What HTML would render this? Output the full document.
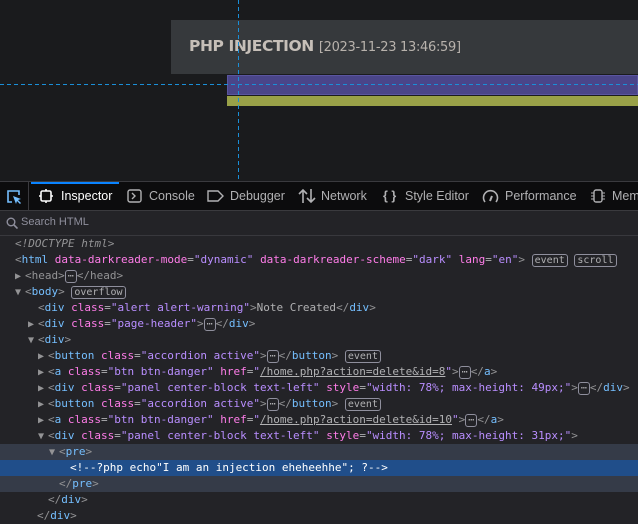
<!DOCTYPE html>
<html><head><style>
*{margin:0;padding:0;box-sizing:border-box}
body{width:638px;height:522px;overflow:hidden;background:#232327;font-family:"Liberation Sans",sans-serif;position:relative}
.page{position:absolute;left:0;top:0;width:638px;height:181px;background:#1a1b1d}
.hdr{position:absolute;left:171px;top:20px;width:467px;height:54px;background:#36393c}
.hdr b{position:absolute;left:18px;top:17px;font-family:"DejaVu Sans",sans-serif;font-size:15.5px;color:#c6bfb8;letter-spacing:-0.4px}
.hdr span{font-family:"DejaVu Sans",sans-serif;font-size:13px;color:#b8b2ac;font-weight:normal;letter-spacing:-0.3px}
.pur{position:absolute;left:227px;top:75px;width:411px;height:20px;background:#4a4589;border:1px solid #5a55a0}
.oli{position:absolute;left:227px;top:96px;width:411px;height:10px;background:#99a148}
.vl{position:absolute;left:238px;top:0;width:1px;height:181px;background:repeating-linear-gradient(180deg,#1a8fd8 0 4px,transparent 4px 7px)}
.hl{position:absolute;left:0;top:84px;width:638px;height:1px;background:repeating-linear-gradient(90deg,#1a8fd8 0 4px,transparent 4px 7px)}
.tb{position:absolute;left:0;top:181px;width:638px;height:30px;background:#0c0c0d;border-top:1px solid #3a3a3e;border-bottom:1px solid #3a3a3e;font-size:12.5px;color:#b1b1b3}
.tb .t{position:absolute;top:7px;white-space:nowrap}
.act{position:absolute;left:31px;top:0;width:88px;height:2px;background:#0a84ff}
.sr{position:absolute;left:0;top:211px;width:638px;height:25px;border-bottom:1px solid #38383d;color:#8f8f9d;font-size:11px}
.code{position:absolute;left:0;top:236px;width:638px;font-family:"DejaVu Sans Mono","Liberation Mono",monospace;font-size:11px;color:#b1b1b3}
.r{height:16px;line-height:16px;white-space:nowrap;position:relative}
.tg{color:#75bfff}.at{color:#ff7de9}.v{color:#b98eff}.g{color:#939395}
.bd{display:inline-block;border:1px solid #8f8f9d;border-radius:3px;font-size:10px;line-height:11px;padding:0 2px;color:#b1b1b3}
.tri{color:#939395;font-size:10px;display:inline-block;width:10px}
u{color:#b1b1b3}
</style></head><body>
<div class="page">
<div class="hdr"><b>PHP INJECTION <span>[2023-11-23 13:46:59]</span></b></div>
<div class="pur"></div><div class="oli"></div>
<div class="hl"></div><div class="vl"></div>
</div>
<div class="tb">
<div class="act"></div>
<svg style="position:absolute;left:6px;top:7px" width="16" height="16" viewBox="0 0 16 16"><path d="M6 13H2V2h11v4" fill="none" stroke="#75bfff" stroke-width="1.6"/><path d="M7 7l8 3-3 1 3 3-1 1-3-3-1 3z" fill="#75bfff"/></svg>
<div style="position:absolute;left:28px;top:0;width:1px;height:28px;background:#3a3a3e"></div>
<svg style="position:absolute;left:39px;top:7px" width="14" height="14" viewBox="0 0 14 14"><rect x="2" y="2" width="10" height="10" rx="1.5" fill="none" stroke="#fff" stroke-width="1.6"/><path d="M7 0v2M7 12v2M0 7h2M12 7h2" stroke="#fff" stroke-width="1.6"/></svg>
<span class="t" style="left:61px;color:#fff">Inspector</span>
<svg style="position:absolute;left:127px;top:7px" width="15" height="14"><rect x="1" y="1" width="13" height="12" rx="2" fill="none" stroke="#b1b1b3" stroke-width="1.4"/><path d="M5 4l3 3-3 3" fill="none" stroke="#b1b1b3" stroke-width="1.4"/></svg>
<span class="t" style="left:149px">Console</span>
<svg style="position:absolute;left:207px;top:8px" width="17" height="12"><path d="M1 1h10l5 5-5 5H1z" fill="none" stroke="#b1b1b3" stroke-width="1.4"/></svg>
<span class="t" style="left:230px">Debugger</span>
<svg style="position:absolute;left:298px;top:6px" width="18" height="16"><path d="M5 15V2M1 6l4-4 4 4M13 1v13M9 10l4 4 4-4" fill="none" stroke="#b1b1b3" stroke-width="1.6"/></svg>
<span class="t" style="left:321px">Network</span>
<span class="t" style="left:383px;font-weight:bold;color:#b1b1b3">{ }</span>
<span class="t" style="left:405px">Style Editor</span>
<svg style="position:absolute;left:482px;top:6px" width="17" height="16"><path d="M3 14A7 7 0 1 1 14 14" fill="none" stroke="#b1b1b3" stroke-width="1.6"/><path d="M8 13l2-5" stroke="#b1b1b3" stroke-width="2"/></svg>
<span class="t" style="left:505px">Performance</span>
<svg style="position:absolute;left:590px;top:6px" width="16" height="16"><rect x="4" y="2" width="8" height="12" rx="2" fill="none" stroke="#b1b1b3" stroke-width="1.4"/><path d="M1 5h3M1 8h3M1 11h3M12 5h3M12 8h3M12 11h3" stroke="#b1b1b3"/></svg>
<span class="t" style="left:612px">Mem</span>
</div>
<div class="sr">
<svg style="position:absolute;left:6px;top:6px" width="12" height="12"><circle cx="5" cy="5" r="3.8" fill="none" stroke="#8f8f9d" stroke-width="1.4"/><path d="M8 8l3.5 3.5" stroke="#8f8f9d" stroke-width="1.6"/></svg>
<span style="position:absolute;left:21px;top:5px">Search HTML</span>
</div>
<div class="code">
<div class="r" style="padding-left:15px"><span class="g"><i>&lt;!DOCTYPE html&gt;</i></span></div>
<div class="r" style="padding-left:15px"><span class="g">&lt;</span><span class="tg">html</span> <span class="at">data-darkreader-mode</span>=<span class="v">"dynamic"</span> <span class="at">data-darkreader-scheme</span>=<span class="v">"dark"</span> <span class="at">lang</span>=<span class="v">"en"</span><span class="g">&gt;</span> <span class="bd">event</span> <span class="bd">scroll</span></div>
<div class="r" style="padding-left:15px"><span class="tri">▶</span><span class="g">&lt;head&gt;<span class="bd">⋯</span>&lt;/head&gt;</span></div>
<div class="r" style="padding-left:15px"><span class="tri">▼</span><span class="g">&lt;</span><span class="tg">body</span><span class="g">&gt;</span> <span class="bd">overflow</span></div>
<div class="r" style="padding-left:38px"><span class="g">&lt;</span><span class="tg">div</span> <span class="at">class</span>=<span class="v">"alert alert-warning"</span><span class="g">&gt;</span>Note Created<span class="g">&lt;/</span><span class="tg">div</span><span class="g">&gt;</span></div>
<div class="r" style="padding-left:28px"><span class="tri">▶</span><span class="g">&lt;</span><span class="tg">div</span> <span class="at">class</span>=<span class="v">"page-header"</span><span class="g">&gt;</span><span class="bd">⋯</span><span class="g">&lt;/</span><span class="tg">div</span><span class="g">&gt;</span></div>
<div class="r" style="padding-left:28px"><span class="tri">▼</span><span class="g">&lt;</span><span class="tg">div</span><span class="g">&gt;</span></div>
<div class="r" style="padding-left:38px"><span class="tri">▶</span><span class="g">&lt;</span><span class="tg">button</span> <span class="at">class</span>=<span class="v">"accordion active"</span><span class="g">&gt;</span><span class="bd">⋯</span><span class="g">&lt;/</span><span class="tg">button</span><span class="g">&gt;</span> <span class="bd">event</span></div>
<div class="r" style="padding-left:38px"><span class="tri">▶</span><span class="g">&lt;</span><span class="tg">a</span> <span class="at">class</span>=<span class="v">"btn btn-danger"</span> <span class="at">href</span>=<span class="v">"<u>/home.php?action=delete&amp;id=8</u>"</span><span class="g">&gt;</span><span class="bd">⋯</span><span class="g">&lt;/</span><span class="tg">a</span><span class="g">&gt;</span></div>
<div class="r" style="padding-left:38px"><span class="tri">▶</span><span class="g">&lt;</span><span class="tg">div</span> <span class="at">class</span>=<span class="v">"panel center-block text-left"</span> <span class="at">style</span>=<span class="v">"width: 78%; max-height: 49px;"</span><span class="g">&gt;</span><span class="bd">⋯</span><span class="g">&lt;/</span><span class="tg">div</span><span class="g">&gt;</span></div>
<div class="r" style="padding-left:38px"><span class="tri">▶</span><span class="g">&lt;</span><span class="tg">button</span> <span class="at">class</span>=<span class="v">"accordion active"</span><span class="g">&gt;</span><span class="bd">⋯</span><span class="g">&lt;/</span><span class="tg">button</span><span class="g">&gt;</span> <span class="bd">event</span></div>
<div class="r" style="padding-left:38px"><span class="tri">▶</span><span class="g">&lt;</span><span class="tg">a</span> <span class="at">class</span>=<span class="v">"btn btn-danger"</span> <span class="at">href</span>=<span class="v">"<u>/home.php?action=delete&amp;id=10</u>"</span><span class="g">&gt;</span><span class="bd">⋯</span><span class="g">&lt;/</span><span class="tg">a</span><span class="g">&gt;</span></div>
<div class="r" style="padding-left:38px"><span class="tri">▼</span><span class="g">&lt;</span><span class="tg">div</span> <span class="at">class</span>=<span class="v">"panel center-block text-left"</span> <span class="at">style</span>=<span class="v">"width: 78%; max-height: 31px;"</span><span class="g">&gt;</span></div>
<div class="r" style="padding-left:49px;background:#353b48"><span class="tri">▼</span><span class="g">&lt;</span><span class="tg">pre</span><span class="g">&gt;</span></div>
<div class="r" style="padding-left:70px;background:#204e8a;color:#fff">&lt;!--?php echo"I am an injection eheheehhe"; ?--&gt;</div>
<div class="r" style="padding-left:59px;background:#353b48"><span class="g">&lt;/</span><span class="tg">pre</span><span class="g">&gt;</span></div>
<div class="r" style="padding-left:48px"><span class="g">&lt;/</span><span class="tg">div</span><span class="g">&gt;</span></div>
<div class="r" style="padding-left:37px"><span class="g">&lt;/</span><span class="tg">div</span><span class="g">&gt;</span></div>
</div>
</body></html>
